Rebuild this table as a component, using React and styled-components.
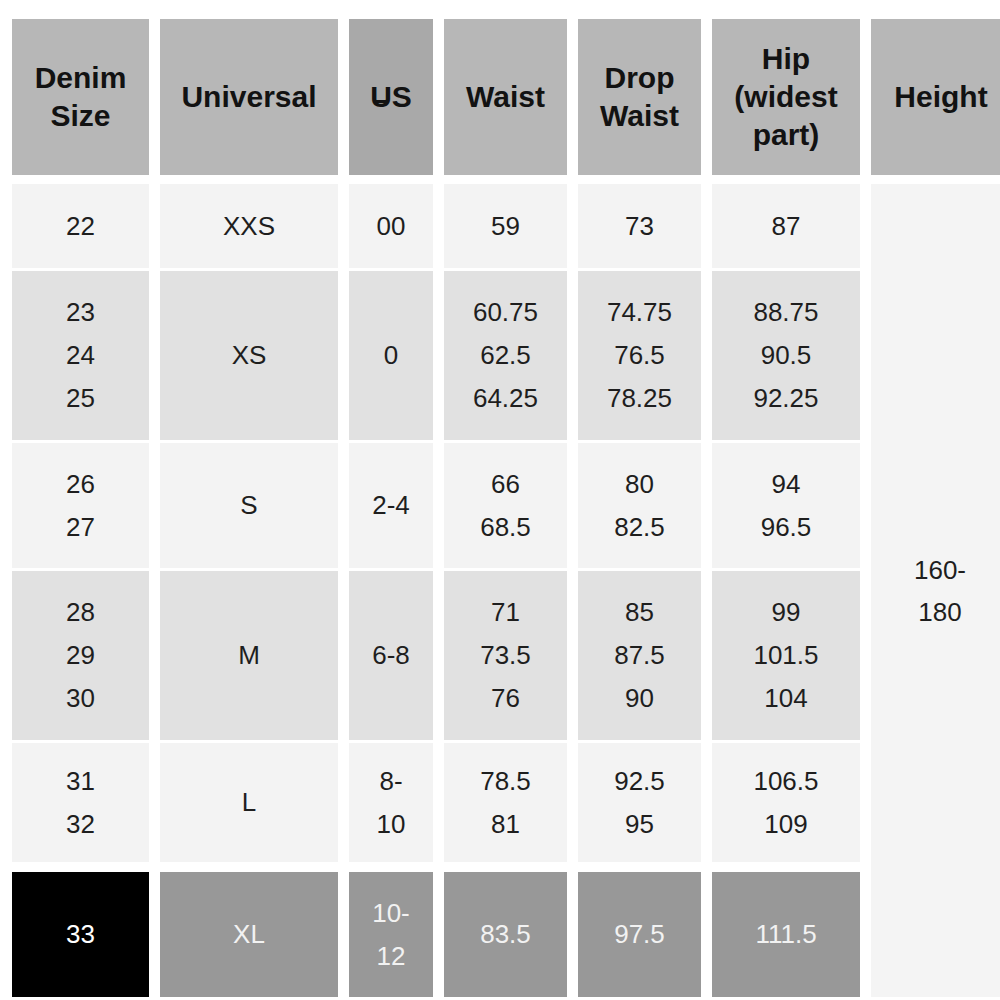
import styled, { createGlobalStyle } from "styled-components";

const GlobalStyle = createGlobalStyle`
  html, body {
    margin: 0;
    background: #ffffff;
    overflow: hidden;
  }
  body {
    font-family: "Liberation Sans", Arial, sans-serif;
    width: 1000px;
  }
`;

const header = [
  { lines: ["Denim", "Size"] },
  { lines: ["Universal"] },
  { lines: ["US"], us: true },
  { lines: ["Waist"] },
  { lines: ["Drop", "Waist"] },
  { lines: ["Hip", "(widest", "part)"] },
  { lines: ["Height"] },
];

const rows = [
  { tone: "light", cells: [["22"], ["XXS"], ["00"], ["59"], ["73"], ["87"]] },
  {
    tone: "mid",
    cells: [
      ["23", "24", "25"],
      ["XS"],
      ["0"],
      ["60.75", "62.5", "64.25"],
      ["74.75", "76.5", "78.25"],
      ["88.75", "90.5", "92.25"],
    ],
  },
  {
    tone: "light",
    cells: [["26", "27"], ["S"], ["2-4"], ["66", "68.5"], ["80", "82.5"], ["94", "96.5"]],
  },
  {
    tone: "mid",
    cells: [
      ["28", "29", "30"],
      ["M"],
      ["6-8"],
      ["71", "73.5", "76"],
      ["85", "87.5", "90"],
      ["99", "101.5", "104"],
    ],
  },
  {
    tone: "light",
    cells: [["31", "32"], ["L"], ["8-", "10"], ["78.5", "81"], ["92.5", "95"], ["106.5", "109"]],
  },
  {
    tone: "dark",
    cells: [["33"], ["XL"], ["10-", "12"], ["83.5"], ["97.5"], ["111.5"]],
  },
];

const tones = {
  light: { bg: "#f3f3f3", fg: "#1e1e1e" },
  mid: { bg: "#e1e1e1", fg: "#1e1e1e" },
  dark: { bg: "#989898", fg: "#f2f2f2" },
};

const Chart = styled.div`
  display: grid;
  grid-template-columns: 137px 178px 84px 123px 123px 148px 140px;
  grid-template-rows: 162px 84px 169px 125px 169px 119px 132px;
  column-gap: 11px;
  row-gap: 3px;
  padding: 19px 0 0 12px;
  width: max-content;
`;

const HeadCell = styled.div`
  margin-bottom: 6px;
  background: ${(p) => (p.$us ? "#a9a9a9" : "#b7b7b7")};
  color: #121212;
  font-weight: 700;
  font-size: 30px;
  line-height: 38px;
  display: flex;
  flex-direction: column;
  align-items: center;
  justify-content: center;
  text-align: center;
`;

const UsMark = styled.span`
  position: relative;

  &::after {
    content: "";
    position: absolute;
    left: 22%;
    right: 22%;
    top: 20px;
    height: 3px;
    background: currentColor;
  }
`;

const Cell = styled.div`
  margin-top: ${(p) => (p.$tone === "dark" ? "7px" : "0")};
  background: ${(p) => (p.$first && p.$tone === "dark" ? "#000000" : tones[p.$tone].bg)};
  color: ${(p) => (p.$first && p.$tone === "dark" ? "#ffffff" : tones[p.$tone].fg)};
  font-size: 26px;
  line-height: 43px;
  display: flex;
  flex-direction: column;
  align-items: center;
  justify-content: center;
  text-align: center;
`;

const HeightCell = styled.div`
  grid-column: 7;
  grid-row: 2 / 8;
  background: #f4f4f4;
  color: #1e1e1e;
  font-size: 26px;
  line-height: 42px;
  display: flex;
  flex-direction: column;
  align-items: center;
  justify-content: center;
  padding-right: 2px;
`;

const Line = styled.span`
  display: block;
  white-space: nowrap;
`;

export default function App() {
  return (
    <>
      <GlobalStyle />
      <Chart>
        {header.map((h, i) => (
          <HeadCell key={i} $us={h.us}>
            {h.us ? (
              <Line>
                <UsMark>U</UsMark>S
              </Line>
            ) : (
              h.lines.map((l) => <Line key={l}>{l}</Line>)
            )}
          </HeadCell>
        ))}
        {rows.map((row, r) =>
          row.cells.map((lines, c) => (
            <Cell key={`${r}-${c}`} $tone={row.tone} $first={c === 0}>
              {lines.map((l) => (
                <Line key={l}>{l}</Line>
              ))}
            </Cell>
          ))
        )}
        <HeightCell>
          <Line>160-</Line>
          <Line>180</Line>
        </HeightCell>
      </Chart>
    </>
  );
}
